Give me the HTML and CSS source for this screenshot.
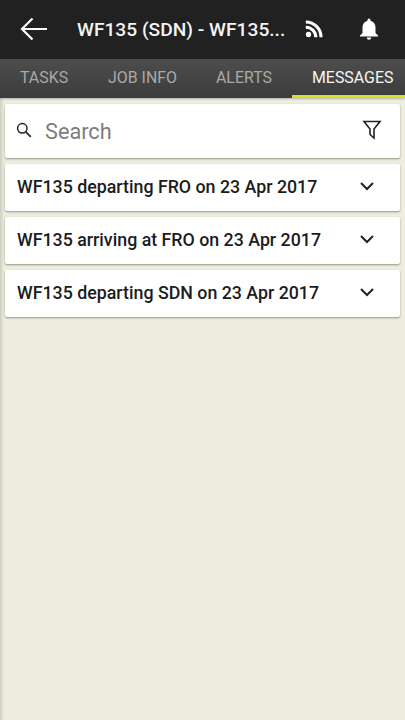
FILE: index.html
```html
<!DOCTYPE html>
<html lang="en">
<head>
<meta charset="utf-8">
<title>Messages</title>
<link rel="stylesheet" href="styles.css">
</head>
<body>
<header class="topbar">
  <svg class="back" width="30" height="26" viewBox="0 0 30 26"><path d="M28 13H3M13.500 2.500L3 13l10.500 10.500" fill="none" stroke="#fff" stroke-width="2.200"/></svg>
  <h1 class="title">WF135 (SDN) - WF135...</h1>
  <svg class="rss" width="20" height="20" viewBox="0 0 20 20"><circle cx="4.500" cy="15.500" r="2.700" fill="#fff"/><path d="M1.800 8.200a10 10 0 0 1 10 10M1.800 3a15.200 15.200 0 0 1 15.200 15.200" fill="none" stroke="#fff" stroke-width="3.100"/></svg>
  <svg class="bell" width="22" height="24" viewBox="0 0 22 24"><path d="M11 1.500a1.500 1.500 0 0 1 1.500 1.500v.8c3.300.8 5 3.500 5 6.700v5.500l2.500 2.500v1H2v-1l2.500-2.500v-5.500c0-3.200 1.700-5.900 5-6.700V3A1.500 1.500 0 0 1 11 1.500zM8.800 20.500h4.400a2.200 2.200 0 0 1-4.400 0z" fill="#fff"/></svg>
</header>
<nav class="tabs">
  <span class="tab tab-tasks">TASKS</span>
  <span class="tab tab-job">JOB INFO</span>
  <span class="tab tab-alerts">ALERTS</span>
  <span class="tab tab-messages">MESSAGES</span>
</nav>
<main class="content">
  <section class="card search">
    <svg class="search-icon" width="18" height="18" viewBox="0 0 18 18"><circle cx="7.300" cy="7.300" r="4.700" fill="none" stroke="#222" stroke-width="1.500"/><path d="M10.800 10.800l5 5" stroke="#222" stroke-width="1.700"/></svg>
    <span class="search-text">Search</span>
    <svg class="filter" width="20" height="22" viewBox="0 0 20 22"><path d="M2 2.500h16l-6 7.500v9l-4-3.500v-5.500z" fill="none" stroke="#222" stroke-width="1.600"/></svg>
  </section>
  <section class="card row">
    <span class="row-text">WF135 departing FRO on 23 Apr 2017</span>
    <svg class="chev" width="16" height="10" viewBox="0 0 16 10"><path d="M2 2l6 6 6-6" fill="none" stroke="#222" stroke-width="2"/></svg>
  </section>
  <section class="card row">
    <span class="row-text">WF135 arriving at FRO on 23 Apr 2017</span>
    <svg class="chev" width="16" height="10" viewBox="0 0 16 10"><path d="M2 2l6 6 6-6" fill="none" stroke="#222" stroke-width="2"/></svg>
  </section>
  <section class="card row">
    <span class="row-text">WF135 departing SDN on 23 Apr 2017</span>
    <svg class="chev" width="16" height="10" viewBox="0 0 16 10"><path d="M2 2l6 6 6-6" fill="none" stroke="#222" stroke-width="2"/></svg>
  </section>
</main>
</body>
</html>
```

FILE: styles.css
```css
* { box-sizing: border-box; }
html, body { margin: 0; height: 100%; }
body {
  width: 405px;
  height: 720px;
  overflow: hidden;
  background: #edeee0;
  font-family: Roboto, sans-serif;
  display: flex;
  flex-direction: column;
}
.topbar {
  height: 59px;
  flex: none;
  background: #212121;
  display: flex;
  align-items: center;
  padding: 0 25px 1px 19px;
}
.back { flex: none; }
.title {
  margin: 1px 0 0 28px;
  flex: 1;
  min-width: 0;
  color: #f4f4f4;
  font-size: 19.200px;
  font-weight: 500;
  white-space: nowrap;
}
.rss { flex: none; margin-right: 34px; }
.bell { flex: none; }
.tabs {
  height: 39px;
  flex: none;
  background: linear-gradient(#4d4d4d, #3c3c3c);
  display: flex;
  align-items: stretch;
  font-size: 15.900px;
  color: #a9a9a9;
  box-shadow: 0 1px 2px rgba(0, 0, 0, .25);
  position: relative;
}
.tab {
  display: flex;
  align-items: center;
  padding-top: 1px;
  border-bottom: 3px solid transparent;
}
.tab-tasks { margin-left: 20px; }
.tab-job { margin-left: 40px; }
.tab-alerts { margin-left: 39px; }
.tab-messages {
  margin-left: auto;
  width: 113px;
  padding-left: 20px;
  color: #f6f6f6;
  border-bottom-color: #dcdc2a;
}
.content {
  flex: 1;
  padding: 6px 5px 0;
  display: flex;
  flex-direction: column;
  gap: 6px;
  box-shadow: inset 4px 0 3px -2px rgba(60, 60, 40, .18);
}
.card {
  background: #fff;
  border-radius: 2px;
  box-shadow: 0 1px 2px rgba(40, 40, 20, .45);
  display: flex;
  align-items: center;
}
.search { height: 54px; padding: 0 18px 2px 10px; }
.search-icon { flex: none; }
.search-text {
  margin: 3px 0 0 12px;
  flex: 1;
  font-size: 21.700px;
  color: #7c7c7c;
}
.filter { flex: none; }
.row { height: 47px; padding: 0 25px 3px 12px; justify-content: space-between; }
.row-text {
  font-size: 17.800px;
  font-weight: 500;
  color: #1c1c1c;
  white-space: nowrap;
}
.chev { flex: none; }
```
